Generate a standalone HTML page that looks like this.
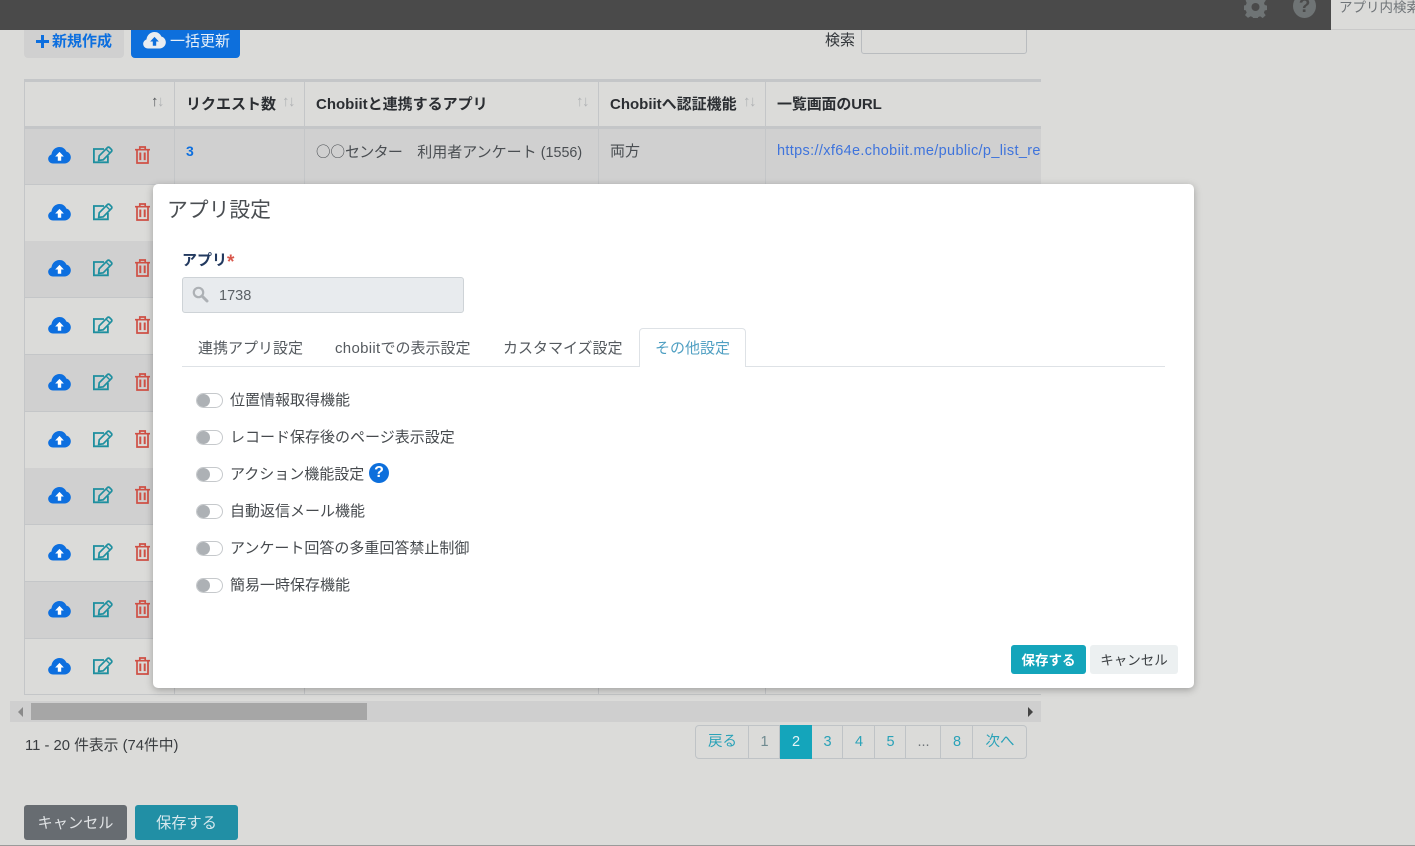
<!DOCTYPE html>
<html lang="ja"><head><meta charset="utf-8"><title>アプリ設定</title>
<style>
*{box-sizing:border-box}
html,body{margin:0;padding:0;width:1415px;height:846px;overflow:hidden;background:#dbdbd9}
body{font-family:"Liberation Sans","Noto Sans CJK JP",sans-serif;font-size:15px;color:#2f3237;position:relative}
.a{position:absolute;white-space:nowrap}
.vl{position:absolute;width:1px;background:#c4c6c8}
.row{position:absolute;left:24px;width:1017px;height:57px;border-bottom:1px solid #c4c6c8}
.d{background:#d0d0d0}
.ic{position:absolute}
.c{left:48px;width:23px;height:17px}
.tg{position:absolute;left:196px;width:27px;height:15px;border:1px solid #c6c9cc;border-radius:8px;background:#fff}
.tg:before{content:"";position:absolute;left:0;top:0;width:13px;height:13px;border-radius:50%;background:#adb1b5}
.lb{position:absolute;left:230px;font-size:15px;line-height:20px;color:#464a4e;white-space:nowrap}
.pg{position:absolute;top:725px;height:34px;border:1px solid #bfc3c6;border-left:0;line-height:33px;padding-left:1px;text-align:center;color:#2aa2b8;font-size:14.5px}
.tab{position:absolute;top:339px;font-size:15px;line-height:20px;color:#555a5f;white-space:nowrap}
.s{position:absolute;top:94px;font-size:15px;line-height:16px;letter-spacing:-1.5px;color:#b0b2b4}
.h{position:absolute;top:94px;font-weight:bold;font-size:15px;line-height:21px;color:#2b2e32;white-space:nowrap}
</style></head>
<body>
<svg width="0" height="0" style="position:absolute">
<symbol id="cl" viewBox="0 0 24 18"><path fill="#0d6fdf" d="M5.2 17.5C2.3 17.500 0 15.300 0 12.600c0-2.100 1.400-4 3.500-4.700C4 3.400 7.500 0 12 0c3.300 0 6.100 1.800 7.200 4.700 2.800.7 4.800 3.200 4.800 6.200 0 3.600-3 6.600-6.800 6.600z"/><path fill="#fff" d="M12 5.200l4.600 4.800h-2.800v4.600h-3.600V10H7.400z"/></symbol>
<symbol id="ed" viewBox="0 0 21 18"><path fill="none" stroke="#1e8f9f" stroke-width="1.8" d="M12 3H1.900v13.300h14V10"/><path fill="none" stroke="#1e8f9f" stroke-width="1.7" d="M7.200 9.800L15.500 1.500Q16.500.8 17.500 1.500L19.500 3.500Q20.200 4.500 19.500 5.500L11.200 13.800L6.700 14.400Z"/><path stroke="#1e8f9f" stroke-width="1.300" d="M14 3l4 4"/></symbol>
<symbol id="tr" viewBox="0 0 15 18"><path fill="none" stroke="#cf5045" stroke-width="1.700" d="M0 3.700h15M2 3.700v13.300h11V3.700M4.800 3.500V1h5.400v2.500"/><path stroke="#cf5045" stroke-width="2" d="M5.300 6.500v7.600M9.700 6.500v7.600"/></symbol>
</svg>

<div class="a" style="left:861px;top:24px;width:166px;height:30px;border:1px solid #b9bcbf;border-radius:3px"></div>
<div class="a" style="left:0;top:0;width:1415px;height:30px;background:#4a4a4a"></div>
<svg class="ic" style="left:1244px;top:-6px" width="23" height="24" viewBox="0 0 23 24"><path fill="#6f7475" d="M9.3 1h4.400l.6 3 2.200 1 2.700-1.600 2.600 3-1.800 2.600.7 2 3 .8v4l-3 .7-.8 2.200 1.800 2.600-3 2.800-2.600-1.800-2 .8-.6 3H9.300l-.6-3-2.100-.9-2.600 1.700-3-2.800 1.700-2.500-.9-2.200-3-.6v-4l3-.7.9-2.100L1.600 6.400l3-3 2.600 1.700 2-.9z"/><circle cx="11.500" cy="13" r="4" fill="#4a4a4a"/></svg>
<div class="a" style="left:1293px;top:-6px;width:23px;height:24px;border-radius:50%;background:#6f7475;color:#4a4a4a;font-weight:bold;font-size:19px;line-height:26px;text-align:center">?</div>
<div class="a" style="left:1331px;top:0;width:84px;height:30px;background:#dbdbd9;border-bottom:1px solid #c9c9c9;overflow:hidden;padding-left:8px;font-size:13.500px;line-height:15px;color:#6f7478">アプリ内検索</div>

<div class="a" style="left:24px;top:30px;width:100px;height:28px;background:#d0d0d0;border-radius:0 0 4px 4px;color:#0d6fdf;font-weight:bold;font-size:15px;line-height:23px;padding-left:28px">新規作成</div>
<div class="a" style="left:36px;top:40px;width:13px;height:3px;background:#0d6fdf"></div>
<div class="a" style="left:41px;top:35px;width:3px;height:13px;background:#0d6fdf"></div>
<div class="a" style="left:131px;top:30px;width:109px;height:28px;background:#0d6fdc;border-radius:0 0 4px 4px;color:#e8f0f8;font-size:15px;line-height:24px;padding-left:39px">一括更新</div>
<svg class="ic" style="left:143px;top:32px" width="23" height="17" viewBox="0 0 24 18"><path fill="#e9edf1" d="M5.200 17.500C2.300 17.500 0 15.300 0 12.600c0-2.100 1.400-4 3.500-4.700C4 3.400 7.500 0 12 0c3.300 0 6.100 1.800 7.200 4.700 2.800.7 4.800 3.200 4.800 6.200 0 3.600-3 6.600-6.800 6.600z"/><path fill="#0d6fdc" d="M12 5.200l4.600 4.800h-2.800v4.600h-3.600V10H7.400z"/></svg>
<div class="a" style="left:825px;top:31px;font-size:15px;line-height:20px;color:#33373b">検索</div>

<div class="a" style="left:24px;top:79px;width:1017px;height:3px;background:#c4c6c8"></div>
<div class="a" style="left:24px;top:126px;width:1017px;height:3px;background:#c4c6c8"></div>

<div class="row d" style="top:129px;height:56px"></div>
<div class="row" style="top:185px"></div>
<div class="row d" style="top:241px"></div>
<div class="row" style="top:298px"></div>
<div class="row d" style="top:355px"></div>
<div class="row" style="top:412px"></div>
<div class="row d" style="top:468px"></div>
<div class="row" style="top:525px"></div>
<div class="row d" style="top:582px"></div>
<div class="row" style="top:639px;height:56px"></div>

<div class="vl" style="left:24px;top:80px;height:615px"></div>
<div class="vl" style="left:174px;top:80px;height:615px"></div>
<div class="vl" style="left:304px;top:80px;height:615px"></div>
<div class="vl" style="left:598px;top:80px;height:615px"></div>
<div class="vl" style="left:765px;top:80px;height:615px"></div>

<div class="s" style="left:151px"><span style="color:#55585b">↑</span>↓</div>
<div class="h" style="left:186px">リクエスト数</div>
<div class="s" style="left:282px">↑↓</div>
<div class="h" style="left:316px">Chobiitと連携するアプリ</div>
<div class="s" style="left:576px">↑↓</div>
<div class="h" style="left:610px">Chobiitへ認証機能</div>
<div class="s" style="left:743px">↑↓</div>
<div class="h" style="left:777px;letter-spacing:-.15px">一覧画面のURL</div>

<div class="a" style="left:186px;top:141px;font-weight:bold;font-size:14px;line-height:20px;color:#0d6fdf">3</div>
<div class="a" style="left:316px;top:141px;font-size:15px;line-height:21px;color:#4a4e52"><span style="font-family:'Noto Sans CJK JP',sans-serif;font-size:14.500px">○○</span><span style="letter-spacing:-.7px">センター</span>　利用者アンケート <span style="font-size:14.300px">(1556)</span></div>
<div class="a" style="left:610px;top:141px;font-size:15px;line-height:21px;color:#4a4e52">両方</div>
<div class="a" style="left:777px;top:141px;width:264px;overflow:hidden;font-size:14.500px;line-height:20px;color:#3f74dc;letter-spacing:.34px">https://xf64e.chobiit.me/public/p_list_record</div>

<svg class="ic c" style="top:147px"><use href="#cl"/></svg><svg class="ic" style="left:92px;top:146px" width="21" height="18"><use href="#ed"/></svg><svg class="ic" style="left:135px;top:146px" width="15" height="18"><use href="#tr"/></svg>
<svg class="ic c" style="top:204px"><use href="#cl"/></svg><svg class="ic" style="left:92px;top:203px" width="21" height="18"><use href="#ed"/></svg><svg class="ic" style="left:135px;top:203px" width="15" height="18"><use href="#tr"/></svg>
<svg class="ic c" style="top:260px"><use href="#cl"/></svg><svg class="ic" style="left:92px;top:259px" width="21" height="18"><use href="#ed"/></svg><svg class="ic" style="left:135px;top:259px" width="15" height="18"><use href="#tr"/></svg>
<svg class="ic c" style="top:317px"><use href="#cl"/></svg><svg class="ic" style="left:92px;top:316px" width="21" height="18"><use href="#ed"/></svg><svg class="ic" style="left:135px;top:316px" width="15" height="18"><use href="#tr"/></svg>
<svg class="ic c" style="top:374px"><use href="#cl"/></svg><svg class="ic" style="left:92px;top:373px" width="21" height="18"><use href="#ed"/></svg><svg class="ic" style="left:135px;top:373px" width="15" height="18"><use href="#tr"/></svg>
<svg class="ic c" style="top:431px"><use href="#cl"/></svg><svg class="ic" style="left:92px;top:430px" width="21" height="18"><use href="#ed"/></svg><svg class="ic" style="left:135px;top:430px" width="15" height="18"><use href="#tr"/></svg>
<svg class="ic c" style="top:487px"><use href="#cl"/></svg><svg class="ic" style="left:92px;top:486px" width="21" height="18"><use href="#ed"/></svg><svg class="ic" style="left:135px;top:486px" width="15" height="18"><use href="#tr"/></svg>
<svg class="ic c" style="top:544px"><use href="#cl"/></svg><svg class="ic" style="left:92px;top:543px" width="21" height="18"><use href="#ed"/></svg><svg class="ic" style="left:135px;top:543px" width="15" height="18"><use href="#tr"/></svg>
<svg class="ic c" style="top:601px"><use href="#cl"/></svg><svg class="ic" style="left:92px;top:600px" width="21" height="18"><use href="#ed"/></svg><svg class="ic" style="left:135px;top:600px" width="15" height="18"><use href="#tr"/></svg>
<svg class="ic c" style="top:658px"><use href="#cl"/></svg><svg class="ic" style="left:92px;top:657px" width="21" height="18"><use href="#ed"/></svg><svg class="ic" style="left:135px;top:657px" width="15" height="18"><use href="#tr"/></svg>

<div class="a" style="left:10px;top:701px;width:1031px;height:21px;background:#cfcfcf"></div>
<div class="a" style="left:31px;top:703px;width:336px;height:17px;background:#a6a6a6"></div>
<div class="a" style="left:18px;top:707px;width:0;height:0;border:5px solid transparent;border-left:0;border-right-color:#8a8a8a"></div>
<div class="a" style="left:1028px;top:707px;width:0;height:0;border:5px solid transparent;border-right:0;border-left-color:#444"></div>

<div class="a" style="left:25px;top:736px;font-size:14.800px;line-height:21px;color:#3a3d40">11 - 20 件表示 (74件中)</div>

<div class="pg" style="left:695px;width:54px;border-left:1px solid #bfc3c6;border-radius:4px 0 0 4px">戻る</div>
<div class="pg" style="left:749px;width:31px;color:#6f8a90">1</div>
<div class="pg" style="left:780px;width:32px;background:#14a5bb;border-color:#14a5bb;color:#e4f4f6">2</div>
<div class="pg" style="left:812px;width:31px">3</div>
<div class="pg" style="left:843px;width:32px">4</div>
<div class="pg" style="left:875px;width:31px">5</div>
<div class="pg" style="left:906px;width:35px;color:#6f7478">...</div>
<div class="pg" style="left:941px;width:32px">8</div>
<div class="pg" style="left:973px;width:54px;border-radius:0 4px 4px 0">次へ</div>

<div class="a" style="left:24px;top:805px;width:103px;height:35px;background:#676c71;border-radius:3px;color:#dfe2e4;font-size:15.200px;line-height:37px;text-align:center">キャンセル</div>
<div class="a" style="left:135px;top:805px;width:103px;height:35px;background:#218fa5;border-radius:3px;color:#d7e9ee;font-size:15.200px;line-height:37px;text-align:center">保存する</div>
<div class="a" style="left:0;top:845px;width:1415px;height:1px;background:#9a9a9a"></div>

<div class="a" style="left:153px;top:184px;width:1041px;height:504px;background:#fff;border-radius:5px;box-shadow:0 2px 8px rgba(0,0,0,.28)"></div>
<div class="a" style="left:167px;top:197px;font-size:20.800px;line-height:28px;color:#4a4e52">アプリ設定</div>
<div class="a" style="left:182px;top:250px;font-size:15px;font-weight:bold;line-height:21px;color:#22395f">アプリ<span style="color:#d9584c;font-size:19px;line-height:10px;vertical-align:-3px">*</span></div>
<div class="a" style="left:182px;top:277px;width:282px;height:36px;background:#e8ebee;border:1px solid #ced3d7;border-radius:3px"></div>
<svg class="ic" style="left:192px;top:286px" width="17" height="17" viewBox="0 0 17 17"><circle cx="6.500" cy="6.500" r="4.700" fill="none" stroke="#adb1b5" stroke-width="2.200"/><path d="M10 10l5 5" stroke="#adb1b5" stroke-width="3" stroke-linecap="round"/></svg>
<div class="a" style="left:219px;top:286px;font-size:14.500px;line-height:21px;color:#5c6166">1738</div>

<div class="a" style="left:182px;top:366px;width:983px;height:1px;background:#dee2e6"></div>
<div class="a" style="left:639px;top:328px;width:107px;height:39px;background:#fff;border:1px solid #dee2e6;border-bottom:0;border-radius:4px 4px 0 0"></div>
<div class="tab" style="left:198px">連携アプリ設定</div>
<div class="tab" style="left:335px"><span style="letter-spacing:.3px">chobiit</span>での表示設定</div>
<div class="tab" style="left:503px">カスタマイズ設定</div>
<div class="tab" style="left:655px;color:#4f9fc2">その他設定</div>

<div class="tg" style="top:393px"></div><div class="lb" style="top:391px">位置情報取得機能</div>
<div class="tg" style="top:430px"></div><div class="lb" style="top:428px">レコード保存後のページ表示設定</div>
<div class="tg" style="top:467px"></div><div class="lb" style="top:465px">アクション機能設定</div>
<div class="a" style="left:369px;top:463px;width:20px;height:20px;border-radius:50%;background:#0d6fdc;color:#fff;font-weight:bold;font-size:16px;line-height:20px;text-align:center">?</div>
<div class="tg" style="top:504px"></div><div class="lb" style="top:502px">自動返信メール機能</div>
<div class="tg" style="top:541px"></div><div class="lb" style="top:539px">アンケート回答の多重回答禁止制御</div>
<div class="tg" style="top:578px"></div><div class="lb" style="top:576px">簡易一時保存機能</div>

<div class="a" style="left:1011px;top:645px;width:75px;height:29px;background:#14a5bb;border-radius:3px;color:#fff;font-weight:bold;font-size:13.500px;line-height:31px;text-align:center">保存する</div>
<div class="a" style="left:1090px;top:645px;width:88px;height:29px;background:#ecf0f1;border-radius:3px;color:#3c4043;font-size:13.500px;line-height:31px;text-align:center">キャンセル</div>
</body></html>
